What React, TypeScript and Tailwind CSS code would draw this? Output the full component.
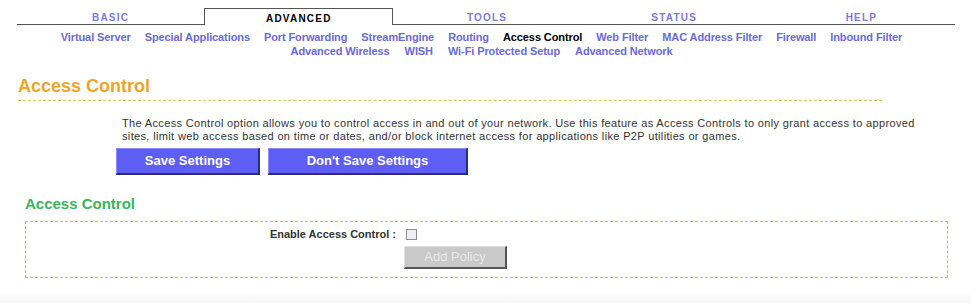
import React from "react";

const tabs = ["BASIC", "ADVANCED", "TOOLS", "STATUS", "HELP"];
const row1 = [
  "Virtual Server",
  "Special Applications",
  "Port Forwarding",
  "StreamEngine",
  "Routing",
  "Access Control",
  "Web Filter",
  "MAC Address Filter",
  "Firewall",
  "Inbound Filter",
];
const row2 = ["Advanced Wireless", "WISH", "Wi-Fi Protected Setup", "Advanced Network"];

export default function App() {
  const font = { fontFamily: '"Liberation Sans", Arial, sans-serif' };
  return (
    <div className="relative w-[971px] h-[303px] bg-white overflow-hidden" style={font}>
      {/* Tabs */}
      <div className="flex ml-[17px] w-[938px] pt-[8px] h-[25px]">
        {tabs.map((t) => {
          const active = t === "ADVANCED";
          return (
            <div
              key={t}
              className={
                "flex-1 flex items-center justify-center text-[10px] font-bold tracking-[1.2px] " +
                (active
                  ? "border-t border-l border-r border-[#555] text-black"
                  : "border-b border-[#555] text-[#7b7bd8]")
              }
            >
              <span className="mt-[2px]">{t}</span>
            </div>
          );
        })}
      </div>
      {/* Sub nav */}
      <div className="flex flex-col items-center mt-[5px] text-[11px] font-bold leading-[14px] tracking-[-0.1px] text-[#6a6ad6] pr-[8px]">
        <div className="flex gap-[14px]">
          {row1.map((s) => (
            <span key={s} className={s === "Access Control" ? "text-black" : ""}>
              {s}
            </span>
          ))}
        </div>
        <div className="flex gap-[15px]">
          {row2.map((s) => (
            <span key={s}>{s}</span>
          ))}
        </div>
      </div>
      {/* Heading */}
      <div className="ml-[18px] mt-[17px] w-[864px]">
        <div className="text-[18px] font-bold text-[#f0a428] leading-[22px]">Access Control</div>
        <div className="mt-[3px] border-t border-dashed border-[#d2d25a]" />
      </div>
      <div className="ml-[122px] mt-[16px] w-[806px] text-[11px] leading-[13px] tracking-[0.35px] text-[#333]">
        The Access Control option allows you to control access in and out of your network. Use this feature as Access Controls to only grant access to approved sites, limit web access based on time or dates, and/or block internet access for applications like P2P utilities or games.
      </div>
      <div className="flex gap-[8px] ml-[116px] mt-[5px]">
        <button className="w-[144px] h-[27px] bg-[#5e5ef4] text-white text-[13px] font-bold border-t border-l border-[#8a8aff] border-r-2 border-b-2 border-r-[#2b2b7a] border-b-[#2b2b7a]">
          Save Settings
        </button>
        <button className="w-[200px] h-[27px] bg-[#5e5ef4] text-white text-[13px] font-bold border-t border-l border-[#8a8aff] border-r-2 border-b-2 border-r-[#2b2b7a] border-b-[#2b2b7a]">
          Don't Save Settings
        </button>
      </div>
      {/* Section */}
      <div className="ml-[25px] mt-[20px] text-[15px] font-bold text-[#3cb45c] leading-[18px]">Access Control</div>
      <div className="ml-[25px] mt-[8px] w-[923px] h-[57px] border border-dashed border-[#c8c828] pt-[4px]">
        <div className="flex items-center">
          <div className="w-[370px] text-right text-[11px] font-bold text-[#333]">Enable Access Control :</div>
          <div className="ml-[10px] w-[11px] h-[11px] border border-[#8a8a9a] bg-[#eef0f6]" />
        </div>
        <div className="flex mt-[3px]">
          <div className="w-[378px]" />
          <button className="w-[103px] h-[23px] bg-[#c9c9c9] text-[#e8e8e8] text-[13px] border-t border-l border-[#e0e0e0] border-r-2 border-b-2 border-r-[#555] border-b-[#555]">
            Add Policy
          </button>
        </div>
      </div>
      <div className="absolute left-0 right-0 bottom-0 h-[12px] bg-gradient-to-b from-white to-[#f6f6f6]" />
    </div>
  );
}
